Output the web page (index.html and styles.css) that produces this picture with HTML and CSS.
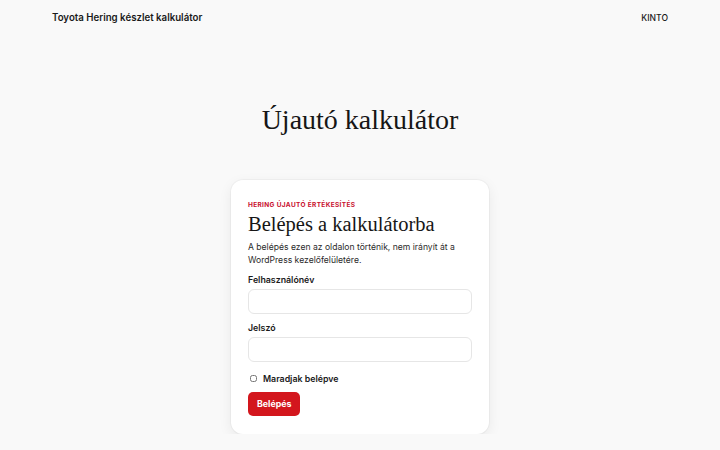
FILE: index.html
```html
<!DOCTYPE html>
<html lang="hu">
<head>
    <meta charset="utf-8">
    <title>Újautó kalkulátor</title>
    <link rel="stylesheet" href="styles.css">
</head>
<body>
<header class="topbar">
    <a class="brand" href="#">Toyota Hering készlet kalkulátor</a>
    <nav class="topnav">
        <a href="#">KINTO</a>
    </nav>
</header>
<main class="page">
    <h1 class="pageTitle">Újautó kalkulátor</h1>
    <section class="card">
        <p class="eyebrow">Hering újautó értékesítés</p>
        <h2 class="cardTitle">Belépés a kalkulátorba</h2>
        <p class="lead">A belépés ezen az oldalon történik, nem irányít át a WordPress kezelőfelületére.</p>
        <form class="loginForm">
            <label class="field">
                <span class="fieldLabel">Felhasználónév</span>
                <input type="text" class="input">
            </label>
            <label class="field">
                <span class="fieldLabel">Jelszó</span>
                <input type="password" class="input">
            </label>
            <label class="remember">
                <input type="checkbox">
                <span>Maradjak belépve</span>
            </label>
            <div>
                <button type="submit" class="btn">Belépés</button>
            </div>
        </form>
    </section>
</main>
</body>
</html>
```

FILE: styles.css
```css
*{
    box-sizing: border-box;
}
body{
    margin: 0;
    background: #f9f9f9;
    color: #1a1a1a;
    font-family: Inter, "Noto Sans", sans-serif;
}
a{
    color: inherit;
    text-decoration: none;
}
.topbar{
    height: 35px;
    padding: 0 52px;
    display: flex;
    align-items: center;
    justify-content: space-between;
}
.brand{
    font-size: 9.7px;
    font-weight: 600;
}
.topnav{
    font-size: 8.6px;
    font-weight: 500;
}
.page{
    display: flex;
    flex-direction: column;
    align-items: center;
}
.pageTitle{
    margin: 66px 0 41px;
    font-family: "Liberation Serif", serif;
    font-weight: 400;
    font-size: 28px;
    line-height: 38px;
    color: #161616;
}
.card{
    width: 258px;
    background: #fff;
    border-radius: 12px;
    padding: 21px 17px 18px;
    box-shadow: 0 4px 14px rgba(0, 0, 0, 0.07), 0 0 0 1px rgba(0, 0, 0, 0.03);
}
.eyebrow{
    margin: 0;
    font-size: 6.5px;
    font-weight: 700;
    letter-spacing: 0.35px;
    text-transform: uppercase;
    color: #c8102e;
    line-height: 9px;
}
.cardTitle{
    margin: 1px 0 4px;
    font-family: "Liberation Serif", serif;
    font-weight: 400;
    font-size: 20.5px;
    line-height: 26px;
    color: #161616;
}
.lead{
    margin: 0 0 7px;
    font-size: 8.6px;
    line-height: 13px;
    color: #2a2a2a;
}
.loginForm{
    display: flex;
    flex-direction: column;
    gap: 8px;
}
.field{
    display: flex;
    flex-direction: column;
    gap: 4px;
}
.fieldLabel{
    font-size: 8.8px;
    font-weight: 600;
}
.input{
    height: 25px;
    border: 1px solid #e6e6e6;
    border-radius: 6px;
    background: #fff;
}
.remember{
    display: flex;
    align-items: center;
    gap: 6px;
    margin: 3px 0 -1px;
    padding-left: 2px;
    font-size: 8.8px;
    font-weight: 600;
}
.remember input{
    margin: 0;
    width: 7px;
    height: 7px;
}
.btn{
    height: 24px;
    padding: 0 9px;
    border: 0;
    border-radius: 5px;
    background: #d3161d;
    color: #fff;
    font-family: inherit;
    font-size: 8.8px;
    font-weight: 700;
}
```
